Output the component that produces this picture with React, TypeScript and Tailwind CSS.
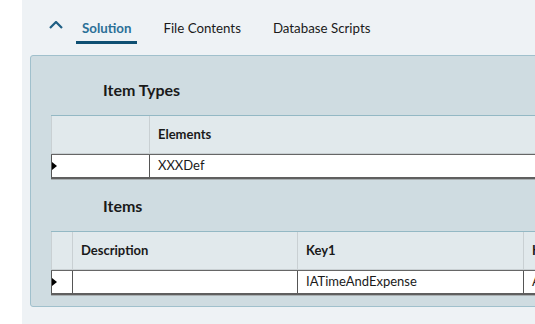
const FONT = "font-['Lato','Open_Sans','Liberation_Sans',sans-serif]";

type Col = { label: string; width: string; value: string };

function Grid({ markerWidth, cols }: { markerWidth: string; cols: Col[] }) {
  return (
    <div className="w-[720px]">
      {/* header row */}
      <div className="flex h-[39px] border-t border-[#93b8c4] border-b border-b-[#c9d0d3] bg-[#e1e9ec]">
        <div className={`${markerWidth} shrink-0 border-l border-r border-[#c9d0d3]`} />
        {cols.map((c) => (
          <div
            key={c.label}
            className={`${c.width} shrink-0 border-r border-[#c9d0d3] flex items-center pl-[8px] text-[13px] font-bold text-[#1a1a1a]`}
          >
            {c.label}
          </div>
        ))}
      </div>
      {/* data row */}
      <div className="flex h-[25px] bg-white border-t border-[#666] border-b-2 border-b-[#5f5f5f] shadow-[0_1px_0_#a8aeb0]">
        <div className={`${markerWidth} shrink-0 border-l border-r border-[#555] relative`}>
          <span className="absolute left-0 top-1/2 -translate-y-1/2 w-0 h-0 border-y-[4px] border-y-transparent border-l-[5px] border-l-black" />
        </div>
        {cols.map((c) => (
          <div
            key={c.label}
            className={`${c.width} shrink-0 border-r border-[#555] flex items-center pl-[8px] text-[13px] text-[#1a1a1a]`}
          >
            {c.value}
          </div>
        ))}
      </div>
    </div>
  );
}

export default function App() {
  return (
    <div className={`flex h-[324px] w-full overflow-hidden bg-white ${FONT}`}>
      <div className="w-[22px] shrink-0 bg-white" />
      <div className="flex-1 bg-[#eef2f5] overflow-hidden">
        {/* tabs */}
        <div className="flex items-end pt-[17px] h-[44px]">
          <div className="ml-[27px] mr-[13px] h-[27px] pt-[4px] text-[#1f5f84]">
            <svg width="14" height="8" viewBox="0 0 14 8" fill="none" stroke="currentColor" strokeWidth={2.2} aria-hidden="true">
              <polyline points="1,7 7,1 13,7" />
            </svg>
          </div>
          <div className="flex gap-[20px]">
            <div className="h-[27px] px-[6px] pt-[1px] border-b-[3px] border-[#0e4f72] text-[13.3px] font-bold text-[#2a6f97] leading-[20px]">
              Solution
            </div>
            <div className="h-[27px] px-[6px] pt-[1px] text-[13.3px] text-[#1a1a1a] leading-[20px]">
              File Contents
            </div>
            <div className="h-[27px] px-[6px] pt-[1px] text-[13.3px] text-[#1a1a1a] leading-[20px]">
              Database Scripts
            </div>
          </div>
        </div>

        {/* panel */}
        <div className="ml-[8px] mt-[11px] w-[620px] h-[252px] rounded-[3px] border border-[#a0c0cc] bg-[#cfdce1] pl-[20px]">
          <h2 className="pt-[24px] pl-[52px] text-[16px] leading-[20px] font-bold text-[#1a1a1a]">Item Types</h2>
          <div className="mt-[15px]">
            <Grid markerWidth="w-[99px]" cols={[{ label: "Elements", width: "w-[600px]", value: "XXXDef" }]} />
          </div>
          <h2 className="mt-[17px] pl-[52px] text-[16px] leading-[20px] font-bold text-[#1a1a1a]">Items</h2>
          <div className="mt-[15px]">
            <Grid
              markerWidth="w-[22px]"
              cols={[
                { label: "Description", width: "w-[225px]", value: "" },
                { label: "Key1", width: "w-[226px]", value: "IATimeAndExpense" },
                { label: "Key2", width: "w-[200px]", value: "A" },
              ]}
            />
          </div>
        </div>
      </div>
    </div>
  );
}
